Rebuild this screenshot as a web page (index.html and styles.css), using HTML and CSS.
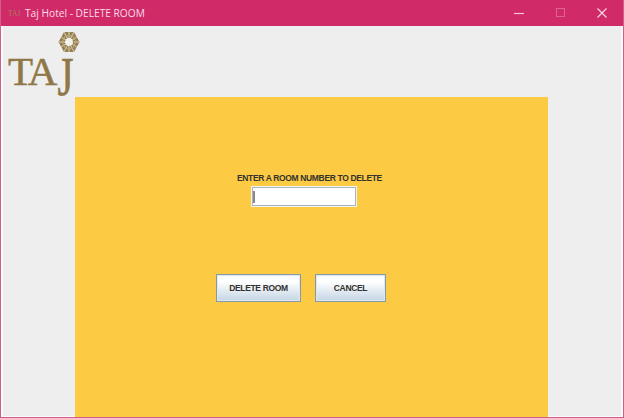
FILE: index.html
```html
<!DOCTYPE html>
<html lang="en">
<head>
    <meta charset="UTF-8">
    <meta name="viewport" content="width=device-width, initial-scale=1.0">
    <title>Taj Hotel - DELETE ROOM</title>
    <link rel="stylesheet" href="styles.css">
</head>
<body>
    <div class="window">
        <div class="titlebar">
            <div class="app-icon">TAJ</div>
            <div class="title">Taj Hotel - DELETE ROOM</div>
            <div class="controls">
                <svg class="control" width="10" height="10" viewBox="0 0 10 10"><path d="M0 5.5H10" stroke="#f7c3d6" stroke-width="1.2"/></svg>
                <svg class="control" width="10" height="10" viewBox="0 0 10 10"><rect x="0.5" y="0.5" width="8" height="8" fill="none" stroke="#e0628f"/></svg>
                <svg class="control" width="10" height="10" viewBox="0 0 10 10"><path d="M0.5 0.5L9.5 9.5M9.5 0.5L0.5 9.5" stroke="#fbdbe6" stroke-width="1.1"/></svg>
            </div>
        </div>
        <div class="content">
            <div class="logo">
                <svg class="emblem" width="22" height="22" viewBox="0 0 22 22">
                    <path d="M6 1H16L21.5 11L16 21H6L0.5 11Z" fill="#97804f"/>
                    <path d="M11 1V21M0.5 11H21.5M6 1L16 21M16 1L6 21M3.2 6L18.8 16M18.8 6L3.2 16" stroke="#e3dac6" stroke-width="0.9" fill="none"/>
                    <path d="M7.5 4.5H14.5L18 11L14.5 17.5H7.5L4 11Z" fill="none" stroke="#b9a781" stroke-width="1"/>
                    <circle cx="11" cy="11" r="4.4" fill="#f3f1ea"/>
                    <circle cx="11" cy="11" r="4.4" fill="none" stroke="#8f7748" stroke-width="1" stroke-dasharray="1.4 1.4"/>
                </svg>
                <div class="logo-text">TA<span class="logo-j">J</span></div>
            </div>
            <div class="panel">
                <div class="prompt">ENTER A ROOM NUMBER TO DELETE</div>
                <div class="room-input"><span class="caret"></span></div>
                <div class="buttons">
                    <button class="btn btn-delete">DELETE ROOM</button>
                    <button class="btn btn-cancel">CANCEL</button>
                </div>
            </div>
        </div>
    </div>
</body>
</html>
```

FILE: styles.css
```css
html, body {
    margin: 0;
    height: 100%;
    overflow: hidden;
}
body {
    font-family: "Liberation Sans", Arial, sans-serif;
}
.window {
    box-sizing: border-box;
    width: 624px;
    height: 418px;
    display: flex;
    flex-direction: column;
    border: 1px solid #cf5f8c;
    border-top: none;
    background-color: #eeeeee;
}
.titlebar {
    height: 26px;
    flex: none;
    display: flex;
    align-items: center;
    background-color: #d02a68;
    color: #fbdbe6;
    font-family: "Open Sans", sans-serif;
    font-size: 10.2px;
}
.app-icon {
    width: 17px;
    margin-left: 7px;
    font-family: "Liberation Serif", serif;
    font-size: 7.5px;
    color: #ad7a5c;
}
.controls {
    margin-left: auto;
    display: flex;
    align-items: center;
    gap: 31.5px;
    margin-right: 16px;
}
.content {
    flex: 1;
    min-height: 0;
    display: flex;
    flex-direction: column;
    border-left: 2px solid #fafafa;
    border-right: 2px solid #fafafa;
    border-bottom: 1px solid #fafafa;
}
.logo {
    height: 71px;
    flex: none;
    position: relative;
}
.emblem {
    position: absolute;
    left: 55px;
    top: 5px;
}
.logo-text {
    position: absolute;
    left: 5px;
    top: 22px;
    font-family: "Liberation Serif", serif;
    font-size: 41px;
    line-height: 46px;
    letter-spacing: -2px;
    color: #8f7748;
    -webkit-text-stroke: 0.5px #8f7748;
}
.logo-j {
    display: inline-block;
    margin-left: 2px;
    transform: scaleY(1.35);
    transform-origin: 50% 20%;
}
.panel {
    flex: 1;
    width: 473px;
    margin-left: 72px;
    margin-bottom: -1px;
    display: flex;
    flex-direction: column;
    align-items: flex-start;
    background-color: #fdcb43;
    color: #33322e;
}
.prompt {
    margin-top: 76px;
    margin-left: 162px;
    font-size: 8.5px;
    font-weight: bold;
    letter-spacing: -0.35px;
    line-height: 11px;
}
.room-input {
    box-sizing: border-box;
    width: 104px;
    height: 19px;
    margin-top: 3px;
    margin-left: 177px;
    padding: 3px 0;
    background-color: #fff;
    border: 1px solid #a9b5bd;
    box-shadow: 0 0 0 1px #f4f5f2;
}
.caret {
    display: block;
    width: 2px;
    height: 12px;
    background-color: #8a8a8a;
}
.buttons {
    display: flex;
    gap: 14px;
    margin-top: 68px;
    margin-left: 141px;
}
.btn {
    box-sizing: border-box;
    height: 28px;
    padding: 0;
    border: 1px solid #8499aa;
    box-shadow: inset 0 0 0 1px #dfe7ec;
    background: linear-gradient(#f6fafc, #fff 25%, #dbe6ef 70%, #c3d5e4);
    color: #33322e;
    font-family: "Liberation Sans", Arial, sans-serif;
    font-size: 8.5px;
    font-weight: bold;
    letter-spacing: -0.35px;
}
.btn-delete {
    width: 85px;
}
.btn-cancel {
    width: 71px;
}
```
